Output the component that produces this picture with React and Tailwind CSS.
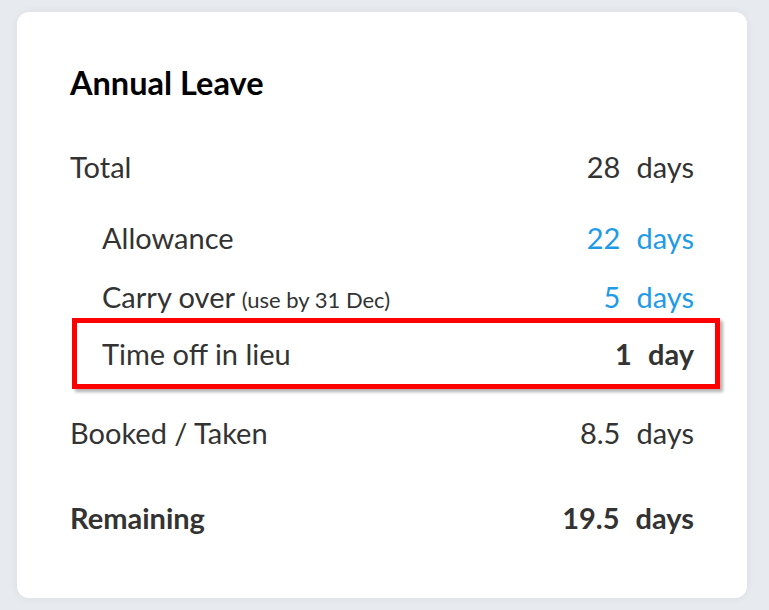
import React from "react";

const Value = ({ n, unit = "days", className = "" }) => (
  <span className={`flex items-baseline ${className}`}>
    <span>{n}</span>
    <span className="ml-[16px]">{unit}</span>
  </span>
);

const Row = ({ label, children, className = "" }) => (
  <div className={`flex items-center justify-between h-[40px] ${className}`}>
    {label}
    {children}
  </div>
);

export default function App() {
  return (
    <div
      className="min-h-screen bg-[#e7eaee] pt-[12px] pl-[17px]"
      style={{ fontFamily: "Lato, 'Open Sans', sans-serif" }}
    >
      <div className="w-[730px] h-[586px] bg-white rounded-[12px] shadow-[0_0_8px_rgba(0,0,0,0.06)] px-[53px] pt-[52px] text-[#333] text-[29px]">
        {/* Header */}
        <h2 className="text-[32.5px] leading-[38px] font-bold text-black">
          Annual Leave
        </h2>

        <Row label={<span>Total</span>} className="mt-[45px]">
          <Value n="28" />
        </Row>

        <Row
          label={<span className="pl-[32px]">Allowance</span>}
          className="mt-[31px]"
        >
          <Value n="22" className="text-[#1e9be8]" />
        </Row>

        <Row
          label={
            <span className="pl-[32px]">
              Carry over{" "}
              <span className="text-[22px]">(use by 31 Dec)</span>
            </span>
          }
          className="mt-[19px]"
        >
          <Value n="5" className="text-[#1e9be8]" />
        </Row>

        {/* highlighted row */}
        <div className="mt-[1px] ml-[2px] -mr-[26px] border-[5px] border-[#ff0000] shadow-[3px_3px_3px_rgba(0,0,0,0.3)]">
          <div className="flex items-center justify-between h-[61px] pl-[25px] pr-[21px]">
            <span>Time off in lieu</span>
            <Value n="1" unit="day" className="font-bold" />
          </div>
        </div>

        <Row label={<span>Booked / Taken</span>} className="mt-[24px]">
          <Value n="8.5" />
        </Row>

        <Row
          label={<span className="font-bold">Remaining</span>}
          className="mt-[45px]"
        >
          <Value n="19.5" className="font-bold" />
        </Row>
      </div>
    </div>
  );
}
